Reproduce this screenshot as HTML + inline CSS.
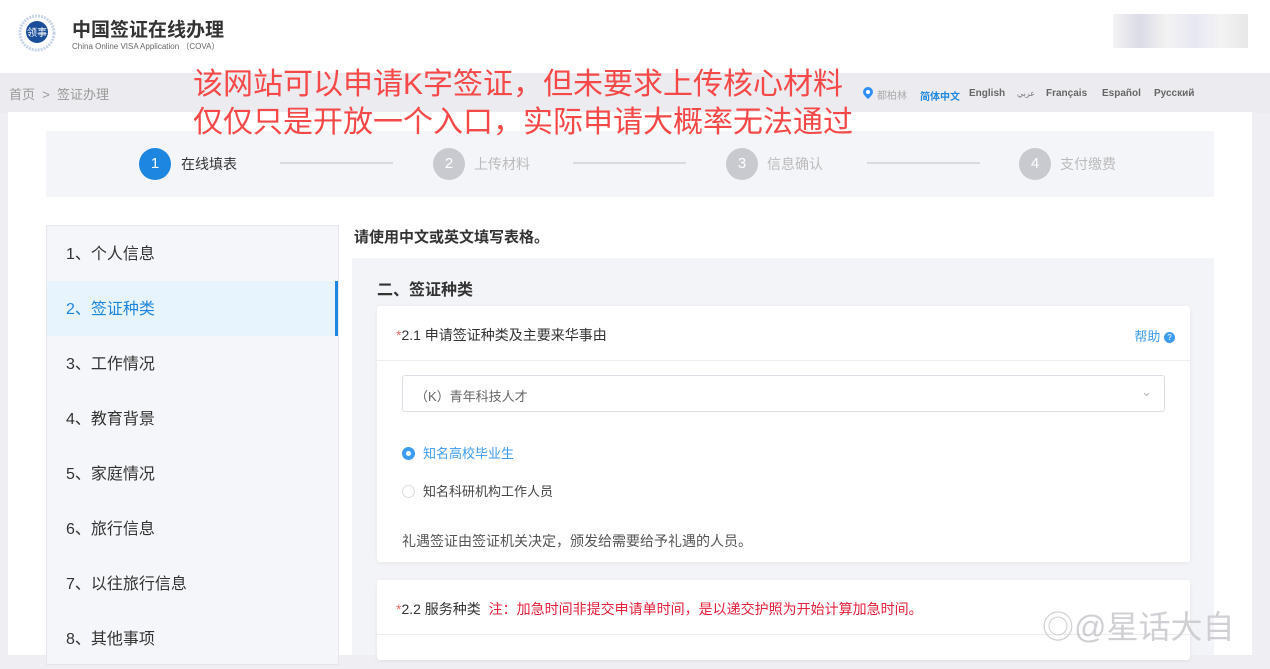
<!DOCTYPE html><html><head><meta charset="utf-8"><style>
*{margin:0;padding:0;box-sizing:border-box}
body{width:1270px;height:655px;overflow:hidden;background:#efeff3;font-family:"Liberation Sans","Noto Sans CJK SC",sans-serif;position:relative;color:#333}
.abs{position:absolute}
.top{left:0;top:0;width:1270px;height:73px;background:#fff}
.bar{left:0;top:73px;width:1270px;height:40px;background:#ececf0}
.main{left:8px;top:112px;width:1244px;height:543px;background:#fff}
.steps{left:46px;top:131px;width:1168px;height:66px;background:#f4f5f8}
.c{width:32px;height:32px;border-radius:50%;color:#fff;font-size:15px;text-align:center;line-height:32px;background:#c8cacf}
.st{font-size:14px;color:#bbb}
.ln{height:2px;background:#d8dadf;top:162px}
.side{left:46px;top:225px;width:293px;height:440px;background:#f5f6f9;border:1px solid #e6e7ea}
.it{height:55px;line-height:58px;padding-left:19px;font-size:16px;color:#333}
.it.a{background:#e8f4fd;color:#1d86e0;border-right:3px solid #1d86e0}
.panel{left:352px;top:258px;width:862px;height:397px;background:#f3f4f7}
.card{background:#fff;border-radius:3px;box-shadow:0 1px 4px rgba(0,0,0,.06)}
.red{color:#f54848;font-size:30px;left:193px;line-height:38px;white-space:nowrap}
.lang{top:88px;font-size:10px;font-weight:bold;color:#666}
</style></head><body>
<div class="abs top"></div>
<svg class="abs" style="left:16px;top:14px" width="42" height="40" viewBox="0 0 42 40"><circle cx="21" cy="19" r="17" fill="none" stroke="#c8d4e8" stroke-width="3" stroke-dasharray="2 1"/><circle cx="21" cy="18" r="11" fill="#1a4d9a"/><text x="21" y="22" font-size="10" fill="#fff" text-anchor="middle">领事</text></svg>
<div class="abs" style="left:72px;top:15px;font-size:19px;font-weight:bold;color:#333">中国签证在线办理</div>
<div class="abs" style="left:72px;top:41px;font-size:8px;color:#666">China Online VISA Application （COVA）</div>
<div class="abs" style="left:1113px;top:14px;width:135px;height:34px;background:linear-gradient(90deg,#eee,#ccd,#eee,#dde,#eee,#ddd);opacity:.7"></div>
<div class="abs bar"></div>
<div class="abs" style="left:9px;top:84px;font-size:13px;color:#999">首页 &nbsp;&gt;&nbsp; 签证办理</div>
<svg class="abs" style="left:862px;top:86px" width="12" height="14" viewBox="0 0 12 14"><path d="M6 1a5 5 0 0 1 5 5c0 3-5 7-5 7S1 9 1 6a5 5 0 0 1 5-5z" fill="#2f8ef0"/><circle cx="6" cy="6" r="2" fill="#fff"/></svg>
<div class="abs" style="left:877px;top:87px;font-size:10px;color:#aaa">都柏林</div>
<div class="abs lang" style="left:920px;color:#1d86e0">简体中文</div>
<div class="abs lang" style="left:969px">English</div>
<div class="abs" style="left:1017px;top:89px;font-size:8px;color:#777">عربي</div>
<div class="abs lang" style="left:1046px">Français</div>
<div class="abs lang" style="left:1102px">Español</div>
<div class="abs lang" style="left:1154px">Русский</div>
<div class="abs main"></div>
<div class="abs steps"></div>
<div class="abs c" style="left:139px;top:148px;background:#1d86e0">1</div><div class="abs st" style="left:181px;top:154px;color:#333">在线填表</div>
<div class="abs ln" style="left:280px;width:113px"></div>
<div class="abs c" style="left:433px;top:148px">2</div><div class="abs st" style="left:474px;top:154px">上传材料</div>
<div class="abs ln" style="left:573px;width:113px"></div>
<div class="abs c" style="left:726px;top:148px">3</div><div class="abs st" style="left:767px;top:154px">信息确认</div>
<div class="abs ln" style="left:867px;width:113px"></div>
<div class="abs c" style="left:1019px;top:148px">4</div><div class="abs st" style="left:1060px;top:154px">支付缴费</div>
<div class="abs side"><div class="it">1、个人信息</div><div class="it a">2、签证种类</div><div class="it">3、工作情况</div><div class="it">4、教育背景</div><div class="it">5、家庭情况</div><div class="it">6、旅行信息</div><div class="it">7、以往旅行信息</div><div class="it">8、其他事项</div></div>
<div class="abs" style="left:354px;top:226px;font-size:15px;font-weight:bold;color:#333">请使用中文或英文填写表格。</div>
<div class="abs panel"></div>
<div class="abs" style="left:377px;top:276px;font-size:16px;font-weight:bold">二、签证种类</div>
<div class="abs card" style="left:377px;top:306px;width:813px;height:256px">
<div style="height:55px;border-bottom:1px solid #eee;padding:19px 0 0 19px;font-size:14px"><span style="color:#f56c6c">*</span>2.1 申请签证种类及主要来华事由<span style="position:absolute;right:15px;top:20px;color:#3d9cf0;font-size:13px">帮助 <span style="display:inline-block;width:11px;height:11px;border-radius:50%;background:#3d9cf0;color:#fff;font-size:8px;text-align:center;line-height:11px;vertical-align:1px">?</span></span></div>
<div style="position:absolute;left:25px;top:69px;width:763px;height:37px;border:1px solid #dcdfe6;border-radius:3px;font-size:13px;color:#666;padding:10px 0 0 12px">（K）青年科技人才<span style="position:absolute;right:12px;top:8px;color:#bbb">⌄</span></div>
<div style="position:absolute;left:25px;top:137px;font-size:13px;color:#3d9cf0"><span style="display:inline-block;width:13px;height:13px;border-radius:50%;border:4px solid #3d9cf0;vertical-align:-2px;margin-right:8px"></span>知名高校毕业生</div>
<div style="position:absolute;left:25px;top:175px;font-size:13px;color:#444"><span style="display:inline-block;width:13px;height:13px;border-radius:50%;border:1px solid #ddd;vertical-align:-2px;margin-right:8px"></span>知名科研机构工作人员</div>
<div style="position:absolute;left:25px;top:225px;font-size:14px;color:#555">礼遇签证由签证机关决定，颁发给需要给予礼遇的人员。</div>
</div>
<div class="abs card" style="left:377px;top:580px;width:813px;height:80px">
<div style="height:55px;border-bottom:1px solid #eee;padding:19px 0 0 19px;font-size:14px"><span style="color:#f56c6c">*</span>2.2 服务种类 &nbsp;<span style="color:#e4203a">注：加急时间非提交申请单时间，是以递交护照为开始计算加急时间。</span></div></div>
<div class="abs" style="left:1042px;top:602px;font-size:32px;color:rgba(200,200,205,.85);white-space:nowrap">◎@星话大自</div>
<div class="abs red" style="top:66px">该网站可以申请K字签证，但未要求上传核心材料</div>
<div class="abs red" style="top:104px">仅仅只是开放一个入口，实际申请大概率无法通过</div>
</body></html>
